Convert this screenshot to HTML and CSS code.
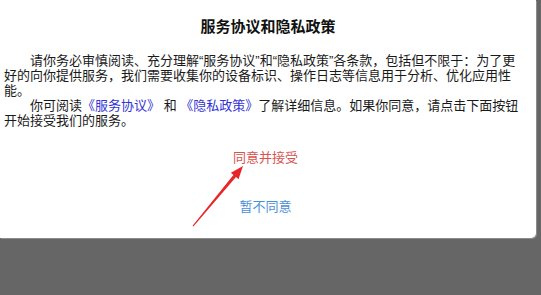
FILE: index.html
```html
<!DOCTYPE html>
<html lang="zh-CN">
<head>
<meta charset="utf-8">
<title>服务协议和隐私政策</title>
<link rel="stylesheet" href="styles.css">
</head>
<body>
<div class="dialog">
  <h1 class="title">服务协议和隐私政策</h1>
  <div class="content">
    <p class="para">请你务必审慎阅读、充分理解“服务协议”和“隐私政策”各条款，包括但不限于：为了更好的向你提供服务，我们需要收集你的设备标识、操作日志等信息用于分析、优化应用性能。</p>
    <p class="para">你可阅读<a class="link">《服务协议》</a> 和 <a class="link">《隐私政策》</a>了解详细信息。如果你同意，请点击下面按钮开始接受我们的服务。</p>
    <div class="actions">
      <div class="btn btn-accept">同意并接受</div>
      <div class="btn btn-reject">暂不同意</div>
    </div>
  </div>
  <svg class="arrow" width="65" height="70" viewBox="0 0 65 70">
    <polygon points="7.6,65.8 48.4,14.9 45.9,12.8 58,6 53.5,19.2 51,17.1 8.4,66.4" fill="#e8262a"/>
  </svg>
</div>
</body>
</html>
```

FILE: styles.css
```css
html, body {
  margin: 0;
  padding: 0;
}
body {
  background: #666666;
  width: 541px;
  height: 295px;
  overflow: hidden;
  font-family: "Liberation Sans", "Noto Sans CJK SC", sans-serif;
}
.dialog {
  position: relative;
  width: 536px;
  height: 238px;
  background: #ffffff;
  border-bottom-right-radius: 5px;
  box-shadow: 1px 1px 0 #8c8c8c;
  box-sizing: border-box;
  padding-top: 17px;
}
.title {
  margin: 0;
  font-size: 15px;
  line-height: 20px;
  font-weight: bold;
  text-align: center;
  color: #111111;
}
.content {
  margin: 16px 0 0 4px;
  width: 519px;
}
.para {
  margin: 0;
  font-size: 13px;
  line-height: 15px;
  text-indent: 26px;
  color: #1a1a1a;
}
.link {
  display: inline-block;
  text-indent: 0;
  line-height: 15px;
  height: 15px;
  overflow: visible;
  color: #3333d6;
}
.actions {
  display: flex;
  flex-direction: column;
  align-items: center;
  padding-top: 20px;
  gap: 29px;
}
.btn {
  font-size: 13px;
  line-height: 20px;
  padding-left: 4px;
}
.btn-accept {
  color: #d9534f;
}
.btn-reject {
  color: #4a90d9;
}
.arrow {
  position: absolute;
  left: 185px;
  top: 160px;
}
```
